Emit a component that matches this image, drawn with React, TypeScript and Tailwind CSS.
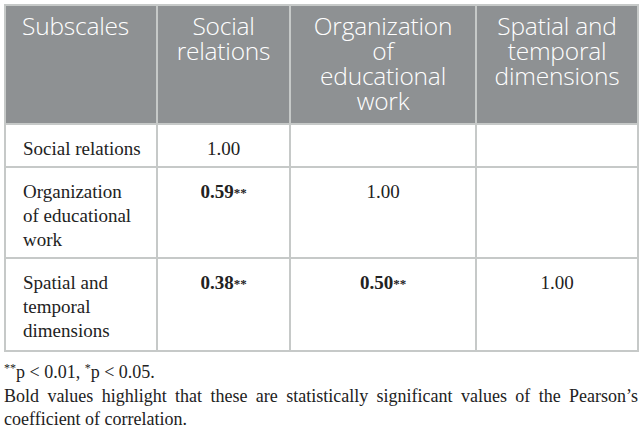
import React from "react";

const head = "font-['Open_Sans',sans-serif] font-light text-white text-[24.5px] leading-[25px] tracking-[-0.2px] align-top px-[16px] pt-[7px] pb-[10px] border-2 border-[#c6c9c8]";
const cell = "font-['Liberation_Serif',serif] text-[19px] leading-[24px] text-[#222] align-top pt-[12px] pb-[5px] border-2 border-[#c6c9c8]";

function Sig({ v }: { v: string }) {
  return (
    <span className="font-bold">
      {v}
      <sup className="text-[13px] relative -top-[1px]">**</sup>
    </span>
  );
}

export default function App() {
  return (
    <div className="w-[642px] h-[429px] bg-white pt-[4px] pl-[4px] pr-[4px] overflow-hidden">
      <table className="border-collapse w-[633px] table-fixed">
        <colgroup>
          <col className="w-[152px]" />
          <col className="w-[133px]" />
          <col className="w-[186px]" />
          <col className="w-[162px]" />
        </colgroup>
        <thead>
          <tr className="bg-[#8e9193]">
            <th className={`${head} text-left`}>Subscales</th>
            <th className={`${head} text-center px-[2px]`}>
              Social
              <br />
              relations
            </th>
            <th className={`${head} text-center px-[2px]`}>
              Organization
              <br />
              of
              <br />
              educational
              <br />
              work
            </th>
            <th className={`${head} text-center px-[1px]`}>
              Spatial and
              <br />
              temporal
              <br />
              dimensions
            </th>
          </tr>
        </thead>
        <tbody>
          <tr>
            <td className={`${cell} pl-[17px] pr-[4px]`}>Social relations</td>
            <td className={`${cell} text-center`}>1.00</td>
            <td className={cell}></td>
            <td className={cell}></td>
          </tr>
          <tr>
            <td className={`${cell} pl-[17px] pr-[4px]`}>
              Organization
              <br />
              of educational
              <br />
              work
            </td>
            <td className={`${cell} text-center`}>
              <Sig v="0.59" />
            </td>
            <td className={`${cell} text-center`}>1.00</td>
            <td className={cell}></td>
          </tr>
          <tr>
            <td className={`${cell} pl-[17px] pr-[4px] pb-[7px]`}>
              Spatial and
              <br />
              temporal
              <br />
              dimensions
            </td>
            <td className={`${cell} text-center`}>
              <Sig v="0.38" />
            </td>
            <td className={`${cell} text-center`}>
              <Sig v="0.50" />
            </td>
            <td className={`${cell} text-center`}>1.00</td>
          </tr>
        </tbody>
      </table>
      <div className="font-['Liberation_Serif',serif] text-[18px] leading-[23px] text-[#222] mt-[8px] w-[634px]">
        <p className="leading-[25px]">
          <sup className="text-[12px]">**</sup>p &lt; 0.01, <sup className="text-[12px]">*</sup>p &lt; 0.05.
        </p>
        <p className="text-justify [text-align-last:left]">
          Bold values highlight that these are statistically significant values of the Pearson’s coefficient of correlation.
        </p>
      </div>
    </div>
  );
}
